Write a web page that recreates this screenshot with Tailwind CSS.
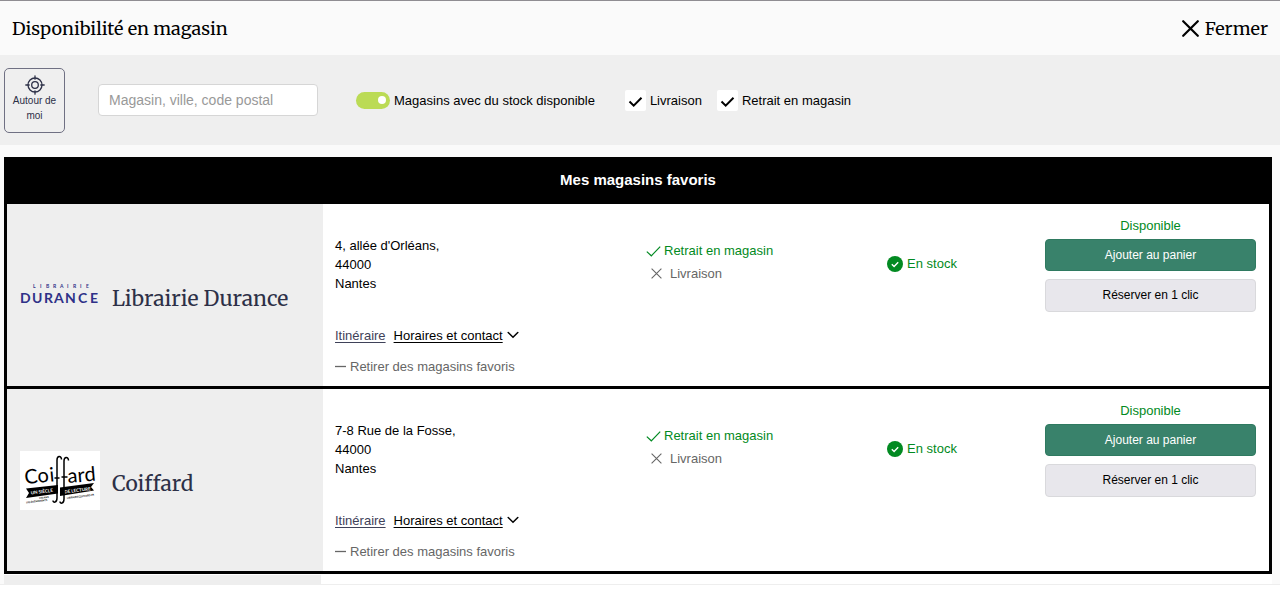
<!DOCTYPE html>
<html lang="fr">
<head>
  <meta charset="UTF-8" />
  <meta name="viewport" content="width=device-width, initial-scale=1.0" />
  <title>Disponibilité en magasin</title>
  <script src="https://cdn.jsdelivr.net/npm/@tailwindcss/browser@4"></script>
</head>
<body class="bg-white font-['Liberation_Sans',Arial,sans-serif] text-[13px] leading-[19px] text-black">
  <div class="bg-[#fafafa] border-t border-t-[#8f8d92] border-b border-b-[#eeeeee]">

    <!-- En-tête -->
    <header class="flex items-center justify-between h-[54px] px-3 font-[Merriweather,'DejaVu_Serif',serif] text-[18px]">
      <h1>Disponibilité en magasin</h1>
      <button type="button" class="flex items-center gap-[6px] cursor-pointer">
        <svg class="size-[17px]" viewBox="0 0 17 17" fill="none" stroke="currentColor" stroke-width="2.2" stroke-linecap="round"><path d="M1.2 1.2l14.6 14.6M15.8 1.2L1.2 15.8" /></svg>
        Fermer
      </button>
    </header>

    <!-- Filtres -->
    <form class="flex items-center bg-[#efefef] h-[90px] pl-1">
      <button type="button" class="flex flex-col items-center w-[61px] h-[65px] pt-[6px] rounded-[5px] border border-[#6f7083] text-[10px] leading-[15px] text-[#2d3047] cursor-pointer">
        <svg class="size-5 shrink-0 -mb-[2px]" viewBox="0 0 20 20" fill="none" stroke="currentColor" stroke-width="1.3" stroke-linecap="round">
          <circle cx="10" cy="10" r="7" />
          <circle cx="10" cy="10" r="3.3" />
          <path d="M10 .8v3.4M10 15.8v3.4M.8 10h3.4M15.8 10h3.4" />
        </svg>
        Autour de moi
      </button>
      <input type="text" aria-label="Magasin, ville, code postal" placeholder="Magasin, ville, code postal" class="w-[220px] h-8 ml-[33px] px-[10px] rounded-[4px] border border-[#d6d6d6] bg-white text-[14px] placeholder:text-[#999999]" />
      <label class="flex items-center gap-1 ml-[38px]">
        <input type="checkbox" checked class="appearance-none flex items-center w-[34px] h-[17px] px-1 rounded-full bg-[#c8c8c8] checked:bg-[#bbdb55] checked:justify-end before:size-2 before:rounded-full before:bg-white" />
        Magasins avec du stock disponible
      </label>
      <label class="flex items-center gap-1 ml-[30px]">
        <span class="relative flex">
          <input type="checkbox" checked class="peer appearance-none size-[21px] rounded-[2px] bg-white" />
          <svg class="hidden peer-checked:block absolute inset-0 size-[21px] pointer-events-none" viewBox="0 0 21 21" fill="none" stroke="currentColor" stroke-width="2"><path d="M4.5 11.500l4.200 4.200L16.500 7.700" /></svg>
        </span>
        Livraison
      </label>
      <label class="flex items-center gap-1 ml-[15px]">
        <span class="relative flex">
          <input type="checkbox" checked class="peer appearance-none size-[21px] rounded-[2px] bg-white" />
          <svg class="hidden peer-checked:block absolute inset-0 size-[21px] pointer-events-none" viewBox="0 0 21 21" fill="none" stroke="currentColor" stroke-width="2"><path d="M4.5 11.500l4.200 4.200L16.500 7.700" /></svg>
        </span>
        Retrait en magasin
      </label>
    </form>

    <main class="pt-3 pl-1 pr-2">
      <!-- Magasins favoris -->
      <section class="border-[3px] border-black bg-white divide-y-[3px] divide-black">
        <h2 class="bg-black text-white text-center font-bold text-[15px] leading-5 pt-[10px] pb-[11px]">Mes magasins favoris</h2>

        <article class="grid grid-cols-[316fr_316fr_173fr_220fr_237fr]">
          <div class="flex items-center gap-3 bg-[#eeeeee] pl-[13px]">
            <svg class="w-20 h-6 shrink-0" viewBox="0 0 80 24" fill="#2f3188" font-family="Lato, sans-serif">
              <text x="13 20 26 33 40 47 53 60 66" y="5" font-size="5" font-weight="700">LIBRAIRIE</text>
              <text x="0 12 24 34 45 58 70" y="20" font-size="14" font-weight="700">DURANCE</text>
            </svg>
            <h3 class="font-[Merriweather,'DejaVu_Serif',serif] text-[21px] leading-6 pt-2 text-[#2d3047]">Librairie Durance</h3>
          </div>
          <div class="pl-3 pt-8 pb-[10px]">
            <address class="not-italic">4, allée d'Orléans,<br />44000<br />Nantes</address>
            <div class="flex items-center gap-2 h-5 mt-8">
              <a href="#" class="underline underline-offset-2 text-[#3f4259]">Itinéraire</a>
              <button type="button" class="flex items-center gap-1 cursor-pointer">
                <span class="underline underline-offset-2">Horaires et contact</span>
                <svg class="w-3 h-2" viewBox="0 0 12 8" fill="none" stroke="currentColor" stroke-width="1.5" stroke-linecap="round"><path d="M1.2 1.5L6 6.3l4.8-4.8" /></svg>
              </button>
            </div>
            <button type="button" class="flex items-center gap-1 mt-3 text-[#666666] cursor-pointer">
              <svg class="w-[11px] h-2" viewBox="0 0 11 8" fill="none" stroke="currentColor" stroke-width="1.3"><path d="M0 3.5h11" /></svg>
              Retirer des magasins favoris
            </button>
          </div>
          <ul class="pl-[7px] pt-[35px] leading-[23px]">
            <li class="flex items-center gap-[3px] text-[#028a22]">
              <svg class="w-[15px] h-3" viewBox="0 0 15 12" fill="none" stroke="currentColor" stroke-width="1.2"><path d="M.8 6.6l4.500 4.200L14.200 1.600" /></svg>
              Retrait en magasin
            </li>
            <li class="flex items-center gap-2 pl-[5px] text-[#666666]">
              <svg class="size-[11px]" viewBox="0 0 11 11" fill="none" stroke="currentColor" stroke-width="1.1"><path d="M.6.6l9.8 9.8M10.4.6L.6 10.4" /></svg>
              Livraison
            </li>
          </ul>
          <p class="flex items-start justify-center gap-1 pt-[50px] text-[#028a22]">
            <svg class="size-4 mt-[2px]" viewBox="0 0 16 16"><circle cx="8" cy="8" r="8" fill="currentColor" /><path d="M4.8 8.2l2.3 2.2 4.1-4.2" fill="none" stroke="#fff" stroke-width="1.4" /></svg>
            En stock
          </p>
          <div class="flex flex-col gap-2 px-[13px] pt-3 text-center">
            <p class="text-[#028a22] -mb-1">Disponible</p>
            <button type="button" class="h-8 rounded-[4px] border border-[#2f7a60] bg-[#39826b] text-white text-[12px] cursor-pointer">Ajouter au panier</button>
            <button type="button" class="h-[33px] rounded-[4px] border border-[#d9d9dc] bg-[#e8e7ec] text-[12px] cursor-pointer">Réserver en 1 clic</button>
          </div>
        </article>

        <article class="grid grid-cols-[316fr_316fr_173fr_220fr_237fr]">
          <div class="flex items-center gap-3 bg-[#eeeeee] pl-[13px]">
            <svg class="w-20 h-[59px] shrink-0" viewBox="0 0 80 59" font-family="Lato, sans-serif">
              <path d="M0 0h80v59H0z" fill="#fff" />
              <text x="5 18 30" y="33" font-size="20" transform="rotate(-5 5 33)">Coi</text>
              <text x="48 58 65" y="32" font-size="20" transform="rotate(-5 48 32)">ard</text>
              <path d="M6 37.500L38 34v8.500L6 47l3-5zM40 36.500l34-4.500-3 4 3 3.500L40 45z" />
              <text x="11" y="43.500" font-size="4.500" font-weight="700" fill="#fff" transform="rotate(-7 11 43.500)">UN SIÈCLE</text>
              <text x="44.500" y="42.500" font-size="4.500" font-weight="700" fill="#fff" transform="rotate(-7 44.500 42.500)">DE LECTURE</text>
              <text x="19" y="48" font-size="2.500" font-weight="700" transform="rotate(-7 19 48)">100 ANS</text>
              <text x="6" y="52.500" font-size="2.500" font-weight="700" transform="rotate(-7 6 52.500)">100 ÉVÉNEMENTS</text>
              <text x="47" y="48" font-size="2.500" font-weight="700" transform="rotate(-7 47 48)">LIBRAIRIECOIFFARD.FR</text>
              <path d="M41.500 8.500c0-4-4.500-4-4.500.5v38c0 5-4 5-4 2.500M48.500 9.500c0-4-4.500-4-4.500.5v38c0 5-4 5-4 2.500M34.500 27h5M41.500 26h6" fill="none" stroke="#000" stroke-width="1.500" />
            </svg>
            <h3 class="font-[Merriweather,'DejaVu_Serif',serif] text-[21px] leading-6 pt-2 text-[#2d3047]">Coiffard</h3>
          </div>
          <div class="pl-3 pt-8 pb-[10px]">
            <address class="not-italic">7-8 Rue de la Fosse,<br />44000<br />Nantes</address>
            <div class="flex items-center gap-2 h-5 mt-8">
              <a href="#" class="underline underline-offset-2 text-[#3f4259]">Itinéraire</a>
              <button type="button" class="flex items-center gap-1 cursor-pointer">
                <span class="underline underline-offset-2">Horaires et contact</span>
                <svg class="w-3 h-2" viewBox="0 0 12 8" fill="none" stroke="currentColor" stroke-width="1.5" stroke-linecap="round"><path d="M1.2 1.5L6 6.3l4.8-4.8" /></svg>
              </button>
            </div>
            <button type="button" class="flex items-center gap-1 mt-3 text-[#666666] cursor-pointer">
              <svg class="w-[11px] h-2" viewBox="0 0 11 8" fill="none" stroke="currentColor" stroke-width="1.3"><path d="M0 3.5h11" /></svg>
              Retirer des magasins favoris
            </button>
          </div>
          <ul class="pl-[7px] pt-[35px] leading-[23px]">
            <li class="flex items-center gap-[3px] text-[#028a22]">
              <svg class="w-[15px] h-3" viewBox="0 0 15 12" fill="none" stroke="currentColor" stroke-width="1.2"><path d="M.8 6.6l4.500 4.200L14.200 1.600" /></svg>
              Retrait en magasin
            </li>
            <li class="flex items-center gap-2 pl-[5px] text-[#666666]">
              <svg class="size-[11px]" viewBox="0 0 11 11" fill="none" stroke="currentColor" stroke-width="1.1"><path d="M.6.6l9.8 9.8M10.4.6L.6 10.4" /></svg>
              Livraison
            </li>
          </ul>
          <p class="flex items-start justify-center gap-1 pt-[50px] text-[#028a22]">
            <svg class="size-4 mt-[2px]" viewBox="0 0 16 16"><circle cx="8" cy="8" r="8" fill="currentColor" /><path d="M4.8 8.2l2.3 2.2 4.1-4.2" fill="none" stroke="#fff" stroke-width="1.4" /></svg>
            En stock
          </p>
          <div class="flex flex-col gap-2 px-[13px] pt-3 text-center">
            <p class="text-[#028a22] -mb-1">Disponible</p>
            <button type="button" class="h-8 rounded-[4px] border border-[#2f7a60] bg-[#39826b] text-white text-[12px] cursor-pointer">Ajouter au panier</button>
            <button type="button" class="h-[33px] rounded-[4px] border border-[#d9d9dc] bg-[#e8e7ec] text-[12px] cursor-pointer">Réserver en 1 clic</button>
          </div>
        </article>
      </section>

      <!-- Début de la liste des autres magasins -->
      <div class="grid grid-cols-4 bg-white pt-[1px]">
        <div class="h-[9px] bg-[#eeeeee]"></div>
      </div>
    </main>
  </div>
</body>
</html>
